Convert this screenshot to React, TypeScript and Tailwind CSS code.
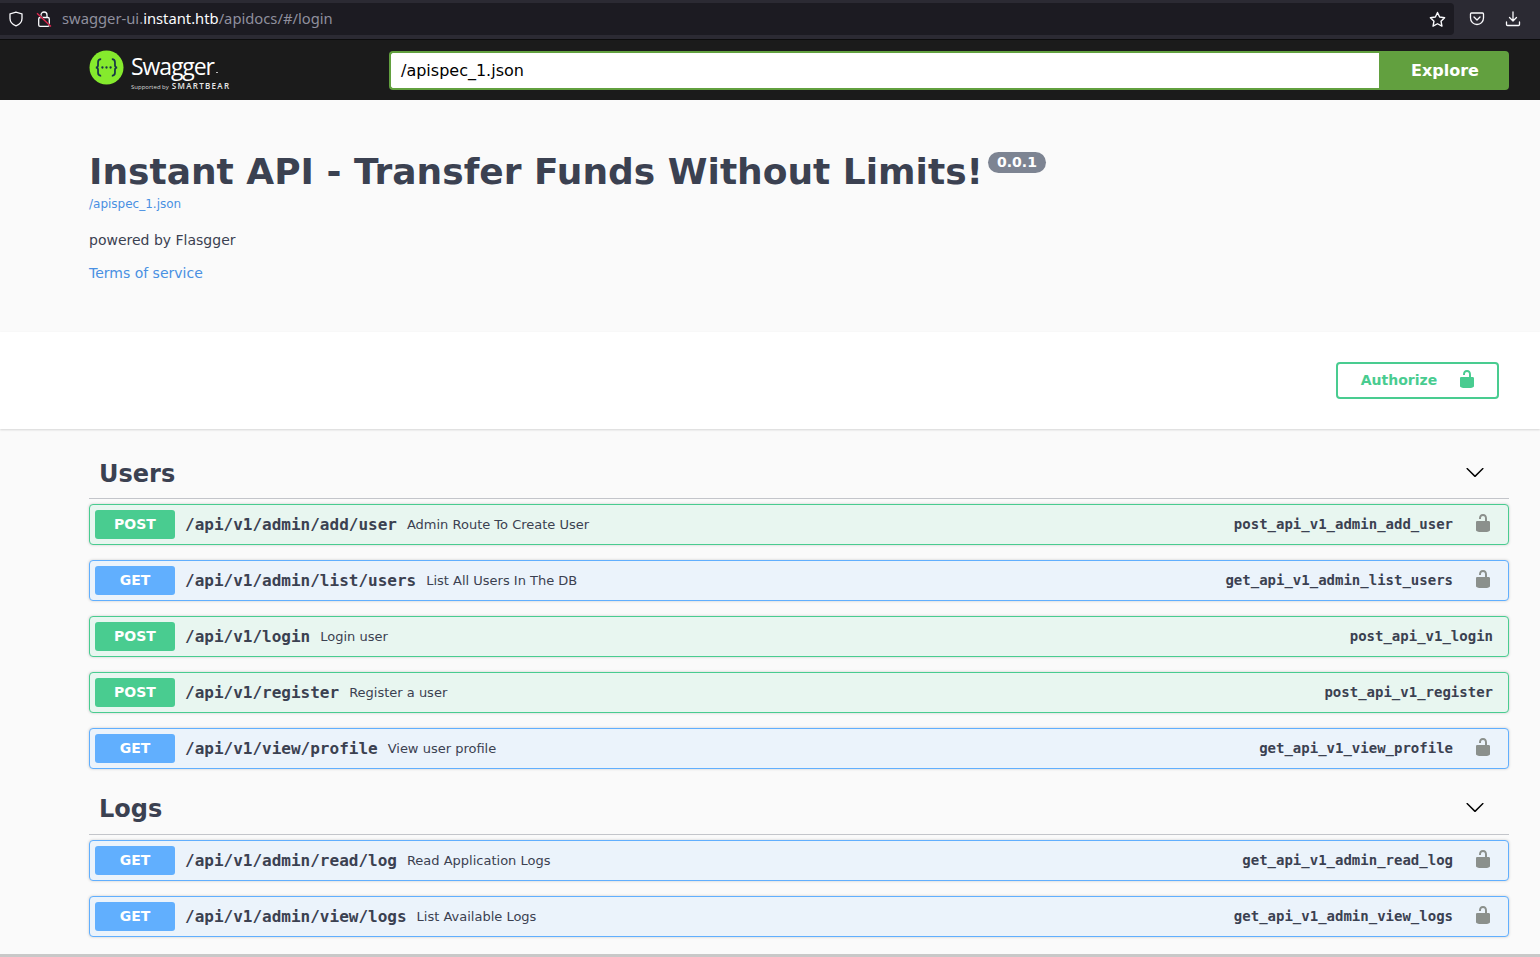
import React from "react";

const Lock = ({ cls }: { cls: string }) => (
  <svg viewBox="0 0 20 20" className={cls} fill="currentColor">
    <path d="M15.8 8H14V5.6C14 2.703 12.665 1 10 1 7.334 1 6 2.703 6 5.6V6h2v-.801C8 3.754 8.797 3 10 3c1.203 0 2 .754 2 2.199V8H4c-.553 0-1 .646-1 1.199V17c0 .549.428 1.139.951 1.307l1.197.387C5.672 18.861 6.55 19 7.1 19h5.8c.549 0 1.428-.139 1.951-.307l1.196-.387c.524-.167.953-.757.953-1.306V9.199C17 8.646 16.352 8 15.8 8z" />
  </svg>
);

const Chevron = () => (
  <svg viewBox="0 0 20 20" className="w-5 h-5 mb-1 text-black" fill="currentColor">
    <path d="M17.418 6.109c.272-.268.709-.268.979 0s.271.701 0 .969l-7.908 7.83c-.27.268-.707.268-.979 0l-7.908-7.83c-.27-.268-.27-.701 0-.969.271-.268.709-.268.979 0L10 13.25l7.418-7.141z" />
  </svg>
);

type Op = { m: "POST" | "GET"; path: string; desc: string; id: string; lock: boolean };

const users: Op[] = [
  { m: "POST", path: "/api/v1/admin/add/user", desc: "Admin Route To Create User", id: "post_api_v1_admin_add_user", lock: true },
  { m: "GET", path: "/api/v1/admin/list/users", desc: "List All Users In The DB", id: "get_api_v1_admin_list_users", lock: true },
  { m: "POST", path: "/api/v1/login", desc: "Login user", id: "post_api_v1_login", lock: false },
  { m: "POST", path: "/api/v1/register", desc: "Register a user", id: "post_api_v1_register", lock: false },
  { m: "GET", path: "/api/v1/view/profile", desc: "View user profile", id: "get_api_v1_view_profile", lock: true },
];
const logs: Op[] = [
  { m: "GET", path: "/api/v1/admin/read/log", desc: "Read Application Logs", id: "get_api_v1_admin_read_log", lock: true },
  { m: "GET", path: "/api/v1/admin/view/logs", desc: "List Available Logs", id: "get_api_v1_admin_view_logs", lock: true },
];

const MONO = "font-['DejaVu_Sans_Mono',monospace]";

function Row({ op }: { op: Op }) {
  const post = op.m === "POST";
  return (
    <div
      className={`h-[41px] mb-[15px] flex items-center pl-[5px] pr-[15px] border rounded-[4px] shadow-[0_0_3px_rgba(0,0,0,0.19)] ${
        post ? "border-[#49cc90] bg-[#e8f6f0]" : "border-[#61affe] bg-[#ebf3fb]"
      }`}
    >
      <div
        className={`w-20 h-[29px] pb-[2px] rounded-[3px] flex items-center justify-center text-white text-sm font-bold ${
          post ? "bg-[#49cc90]" : "bg-[#61affe]"
        }`}
      >
        {op.m}
      </div>
      <span className={`ml-[10px] text-base font-semibold text-[#3b4151] ${MONO}`}>{op.path}</span>
      <span className="ml-[10px] text-[13px] text-[#3b4151] flex-1">{op.desc}</span>
      <span className={`text-sm font-semibold text-[#3b4151] mb-[2px] ${MONO}`}>{op.id}</span>
      {op.lock && (
        <span className="ml-[20px] mb-1 w-[20px] flex justify-center">
          <Lock cls="w-5 h-5 text-[#8b908c]" />
        </span>
      )}
    </div>
  );
}

function Section({ title, ops, h }: { title: string; ops: Op[]; h: string }) {
  return (
    <section>
      <div className={`${h} flex items-center justify-between pl-[10px] pr-[24px] border-b border-[#c3c5ca] mb-[5px]`}>
        <h3 className="text-2xl font-bold text-[#3b4151]">{title}</h3>
        <Chevron />
      </div>
      {ops.map((o) => (
        <Row key={o.id} op={o} />
      ))}
    </section>
  );
}

export default function App() {
  return (
    <div className="h-[957px] overflow-hidden flex flex-col bg-[#fafafa] font-['DejaVu_Sans',sans-serif] text-[#3b4151]">
      {/* browser toolbar */}
      <div className="h-[40px] shrink-0 bg-[#2b2a33] border-b border-[#0c0c0d] flex items-start">
        <div className="mt-[3px] h-[32px] w-[1454px] bg-[#1c1b22] rounded-r-[4px] flex items-center text-[#fbfbfe]">
          <svg viewBox="0 0 16 16" className="w-4 h-4 ml-2" fill="none" stroke="currentColor" strokeWidth="1.3">
            <path d="M8 1.2 2 3v4.6c0 3.3 2.6 5.9 6 7.2 3.4-1.3 6-3.9 6-7.2V3L8 1.2z" />
          </svg>
          <svg viewBox="0 0 16 16" className="w-4 h-4 ml-[12px]" fill="none" strokeWidth="1.3">
            <path d="M5 6.500V4a3 3 0 0 1 6 0v2.500" stroke="#fbfbfe" />
            <rect x="2.700" y="6.500" width="10.600" height="8.800" rx="1.400" stroke="#fbfbfe" />
            <path d="M1.700 2.900l14 13" stroke="#1c1b22" strokeWidth="1.500" />
            <path d="M1 2.200l14 13.300" stroke="#e22850" strokeWidth="1.300" />
          </svg>
          <span className="ml-[10px] mb-[2px] text-[14.75px] text-[#8f8f9d] font-['Noto_Sans',sans-serif]">
            swagger-ui.<span className="text-[#fbfbfe]">instant.htb</span>/apidocs/#/login
          </span>
          <svg viewBox="0 0 16 16" className="w-[17px] h-[17px] ml-auto mr-[8px]" fill="none" stroke="currentColor" strokeWidth="1.3" strokeLinejoin="round">
            <path d="M8 1.400l2 4.300 4.700.6-3.400 3.300.9 4.700L8 12l-4.200 2.300.9-4.700L1.300 6.300 6 5.700 8 1.400z" />
          </svg>
        </div>
        <div className="flex-1 flex items-center h-[38px] text-[#fbfbfe]">
          <svg viewBox="0 0 16 16" className="w-4 h-4 ml-[15px]" fill="none" stroke="currentColor" strokeWidth="1.3" strokeLinecap="round" strokeLinejoin="round">
            <path d="M2.500 2h11c.6 0 1 .4 1 1v4a6.500 6.500 0 0 1-13 0V3c0-.6.4-1 1-1z" />
            <path d="M5 6l3 3 3-3" />
          </svg>
          <svg viewBox="0 0 16 16" className="w-4 h-4 ml-[20px]" fill="none" stroke="currentColor" strokeWidth="1.3" strokeLinecap="round" strokeLinejoin="round">
            <path d="M8 1v9M4.500 6.500 8 10l3.500-3.500M1.500 11v2.500c0 .6.4 1 1 1h11c.6 0 1-.4 1-1V11" />
          </svg>
        </div>
      </div>

      {/* swagger top bar */}
      <header className="h-[60px] shrink-0 bg-[#1b1b1b] flex items-center pl-[89px] pr-[31px]">
        <div className="w-[300px] h-[50px] shrink-0 flex items-start">
          <svg viewBox="0 0 36 36" className="w-[35px] h-[35px] mt-[5px]">
            <circle cx="18" cy="18" r="17.500" fill="#85ea2d" />
            <path d="M12.500 9.500c-2.500 0-3.200 1.200-3.200 3v3.200c0 1.300-.8 2.300-2.300 2.300 1.500 0 2.300 1 2.300 2.300v3.200c0 1.800.7 3 3.200 3M23.500 9.500c2.500 0 3.200 1.200 3.200 3v3.200c0 1.300.8 2.300 2.300 2.300-1.500 0-2.300 1-2.300 2.300v3.200c0 1.800-.7 3-3.200 3" fill="none" stroke="#173647" strokeWidth="1.800" />
            <circle cx="13.800" cy="18" r="1.200" fill="#173647" />
            <circle cx="18" cy="18" r="1.200" fill="#173647" />
            <circle cx="22.200" cy="18" r="1.200" fill="#173647" />
          </svg>
          <div className="ml-[7px] flex flex-col text-white font-['Open_Sans',sans-serif]">
            <span className="flex items-end text-[23px] leading-[26px] tracking-[-1.1px] mt-[8px]">
              Swagger
              <span className="w-[2px] h-[1px] bg-[#bbbbbb] ml-[2px] mb-[6px]" />
            </span>
            <span className="flex items-baseline leading-[9px] mt-[2px] whitespace-nowrap">
              <span className="text-[6px] text-[#d8d8d8]">Supported by</span>
              <span className="text-[8px] font-semibold tracking-[1.3px] ml-[3px] text-[#e8e8e8]">SMARTBEAR</span>
            </span>
          </div>
        </div>
        <div className="flex-1 flex h-[39px]">
          <div className="flex-1 bg-white border-2 border-[#62a03f] border-r-0 rounded-l-[4px] flex items-center pl-[10px] pt-[2px] text-base text-black">
            /apispec_1.json
          </div>
          <div className="w-[130px] bg-[#62a03f] rounded-r-[4px] flex items-center justify-center pl-[2px] pt-[2px] text-white text-base font-bold">
            Explore
          </div>
        </div>
      </header>

      {/* info */}
      <div className="h-[232px] shrink-0 pl-[89px] pt-[50px]">
        <div className="flex items-start">
          <h2 className="text-[36px] leading-[43px] font-bold text-[#3b4151]">Instant API - Transfer Funds Without Limits!</h2>
          <span className="ml-[5px] mt-[2px] h-[21px] px-[9px] pb-[2px] rounded-[57px] bg-[#7d8492] text-white text-sm font-bold flex items-center">0.0.1</span>
        </div>
        <div className="text-xs text-[#4990e2] mt-[4px] leading-[15px]">/apispec_1.json</div>
        <p className="text-sm mt-[20px] leading-[17px]">powered by Flasgger</p>
        <p className="text-sm text-[#4990e2] mt-4 leading-[17px]">Terms of service</p>
      </div>

      {/* scheme */}
      <div className="h-[97px] shrink-0 bg-white shadow-[0_1px_2px_rgba(0,0,0,0.15)] flex items-center justify-end pr-[41px] pb-[1px]">
        <div className="w-[163px] h-[37px] border-2 border-[#49cc90] rounded-[4px] flex items-center justify-center text-[#49cc90] text-sm font-bold">
          <span className="ml-[3px]">Authorize</span>
          <Lock cls="w-5 h-5 ml-[20px] mb-[2px]" />
        </div>
      </div>

      {/* operations */}
      <main className="flex-1 min-h-0 pr-[31px] pl-[89px] pt-[21px]">
        <Section title="Users" ops={users} h="h-[49px]" />
        <div className="mt-[-1px]">
          <Section title="Logs" ops={logs} h="h-[52px]" />
        </div>
      </main>
      <div className="h-[3px] shrink-0 bg-[#c8c8c8]" />
    </div>
  );
}
